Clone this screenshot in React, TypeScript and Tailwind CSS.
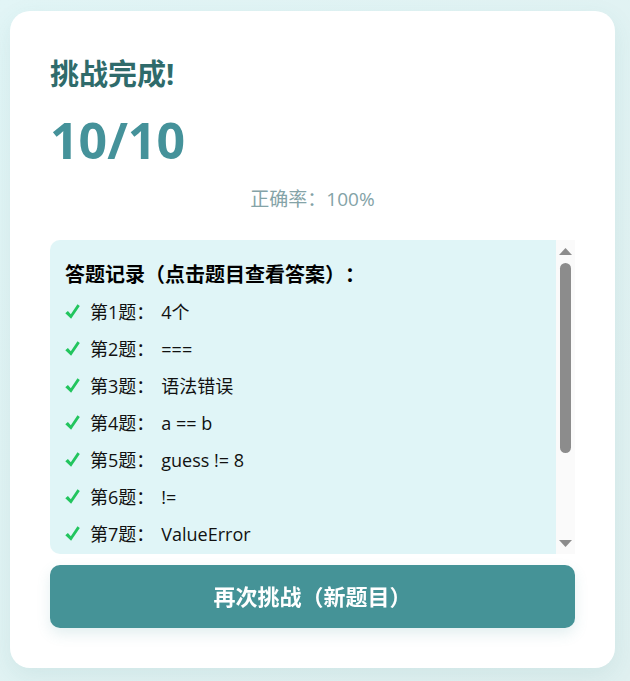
import React from 'react'

const records = [
  { q: 1, a: '4个' },
  { q: 2, a: '===' },
  { q: 3, a: '语法错误' },
  { q: 4, a: 'a == b' },
  { q: 5, a: 'guess != 8' },
  { q: 6, a: '!=' },
  { q: 7, a: 'ValueError' },
  { q: 8, a: 'while True' },
  { q: 9, a: 'break' },
  { q: 10, a: 'int(input())' },
]

const font = { fontFamily: '"Open Sans", "Noto Sans CJK SC", sans-serif' }

const Check = () => (
  <svg width="15" height="15" viewBox="0 0 15 15">
    <path d="M0.3 9.2 L2.9 7 L5.8 10.3 L12.5 0.3 L14.8 1.9 L6.1 14.8 Z" fill="#22c55e" />
  </svg>
)

export default function App() {
  return (
    <div
      className="min-h-[681px] w-full bg-gradient-to-br from-[#e2f5f6] to-[#e0f0f0] pt-[11px] px-[10px] pb-[14px] [text-spacing-trim:space-all]"
      style={font}
    >
      <div className="bg-white rounded-[20px] shadow-[0_8px_24px_rgba(60,140,140,0.10)] px-[40px] pt-[40px] pb-[40px] w-[605px]">
        <h2 className="text-[29px] font-bold text-[#2f6b6b] leading-[40px] mt-[3px]">挑战完成!</h2>
        <div className="text-[50px] font-bold text-[#45929a] leading-[72px] mt-[10px]">10/10</div>
        <p className="text-center text-[19px] text-[#84a3a7] leading-[26px] mt-[10px]">正确率：100%</p>
        <div className="mt-[28px] h-[314px] flex">
          <div className="flex-1 overflow-y-auto [scrollbar-width:none] bg-[#e0f5f7] rounded-l-[10px] px-[15px] pt-[20px] pb-[15px]">
            <div className="text-[20px] font-bold text-black leading-[30px] mb-[4px]">答题记录（点击题目查看答案）：</div>
            {records.map(r => (
              <div key={r.q} className="flex items-center h-[37px] text-[18px] text-[#111] cursor-pointer">
                <span className="w-[25px] flex mb-[2px]"><Check /></span>
                <span>第{r.q}题：</span>
                <span className="ml-[7px]">{r.a}</span>
              </div>
            ))}
          </div>
          <div className="w-[19px] bg-[#fafafa] flex flex-col items-center pt-[8px] pb-[7px]">
            <svg width="13" height="7" viewBox="0 0 13 7"><polygon points="0,7 6.5,0 13,7" fill="#8c8c8c" /></svg>
            <div className="mt-[8px] w-[11px] h-[190px] rounded-full bg-[#8c8c8c]" />
            <div className="flex-1" />
            <svg width="13" height="7" viewBox="0 0 13 7"><polygon points="0,0 13,0 6.5,7" fill="#8c8c8c" /></svg>
          </div>
        </div>
        <button className="mt-[11px] w-full h-[63px] rounded-[10px] bg-[#459397] text-white text-[22px] font-bold shadow-[0_6px_14px_rgba(69,147,151,0.15)]">
          再次挑战（新题目）
        </button>
      </div>
    </div>
  )
}
